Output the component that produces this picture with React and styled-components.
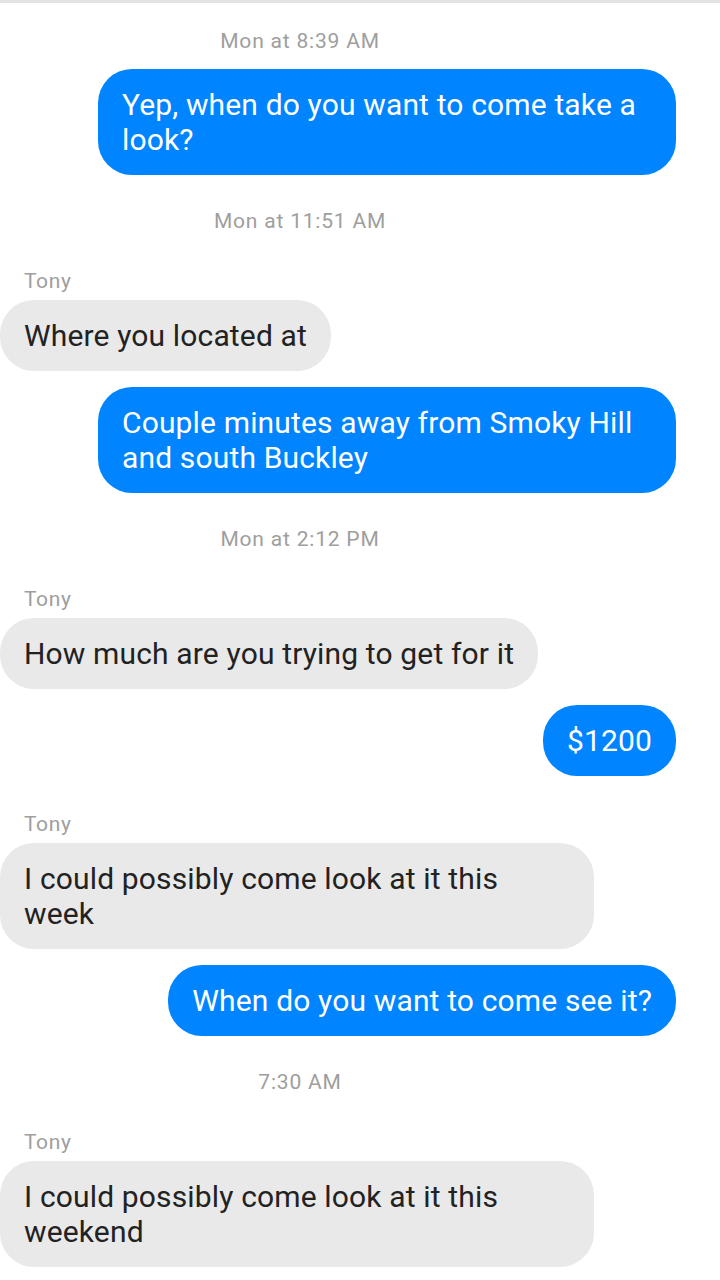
import React from "react";
import styled, { createGlobalStyle } from "styled-components";

const Global = createGlobalStyle`
  html, body { margin: 0; padding: 0; background: #fff; }
  body { font-family: Roboto, "Noto Sans", "Liberation Sans", sans-serif; }
`;

const Screen = styled.div`
  width: 720px;
  min-height: 1280px;
  background: #fff;
  border-top: 3px solid #e3e3e3;
  box-sizing: border-box;
  display: flex;
  flex-direction: column;
  padding-top: 26px;
`;

const Stamp = styled.div`
  width: 600px;
  text-align: center;
  font-size: 21px;
  letter-spacing: 0.8px;
  line-height: 24px;
  color: #9e9e9e;
  margin-top: ${(p) => (p.$first ? "0" : "34px")};
  margin-bottom: ${(p) => (p.$toBubble ? "16px" : "0")};
`;

const Sender = styled.div`
  padding-left: 24px;
  font-size: 21px;
  letter-spacing: 0.6px;
  line-height: 24px;
  color: #9e9e9e;
  margin-top: 36px;
  margin-bottom: 7px;
`;

const Row = styled.div`
  display: flex;
  justify-content: ${(p) => (p.$out ? "flex-end" : "flex-start")};
  padding-right: ${(p) => (p.$out ? "44px" : "0")};
  margin-top: ${(p) => (p.$gap ? "16px" : "0")};
`;

const Bubble = styled.div`
  box-sizing: border-box;
  max-width: ${(p) => (p.$out ? "578px" : "594px")};
  width: ${(p) => (p.$wrap ? (p.$out ? "578px" : "594px") : "auto")};
  padding: 18px ${(p) => (p.$wrap ? "30px" : "24px")} 18px 24px;
  border-radius: 34px;
  font-size: 30px;
  letter-spacing: 0.15px;
  line-height: 35px;
  background: ${(p) => (p.$out ? "#0084ff" : "#e9e9e9")};
  color: ${(p) => (p.$out ? "#ffffff" : "#222222")};
`;

const items = [
  { t: "stamp", text: "Mon at 8:39 AM", first: true, toBubble: true },
  { t: "out", text: "Yep, when do you want to come take a look?", wrap: true },
  { t: "stamp", text: "Mon at 11:51 AM" },
  { t: "sender", text: "Tony" },
  { t: "in", text: "Where you located at" },
  { t: "out", text: "Couple minutes away from Smoky Hill and south Buckley", wrap: true, gap: true },
  { t: "stamp", text: "Mon at 2:12 PM" },
  { t: "sender", text: "Tony" },
  { t: "in", text: "How much are you trying to get for it" },
  { t: "out", text: "$1200", gap: true },
  { t: "sender", text: "Tony" },
  { t: "in", text: "I could possibly come look at it this week", wrap: true },
  { t: "out", text: "When do you want to come see it?", gap: true },
  { t: "stamp", text: "7:30 AM" },
  { t: "sender", text: "Tony" },
  { t: "in", text: "I could possibly come look at it this weekend", wrap: true },
];

export default function App() {
  return (
    <>
      <Global />
      <Screen>
        {items.map((it, i) => {
          if (it.t === "stamp")
            return (
              <Stamp key={i} $first={it.first} $toBubble={it.toBubble}>
                {it.text}
              </Stamp>
            );
          if (it.t === "sender") return <Sender key={i}>{it.text}</Sender>;
          const out = it.t === "out";
          return (
            <Row key={i} $out={out} $gap={it.gap}>
              <Bubble $out={out} $wrap={it.wrap}>
                {it.text}
              </Bubble>
            </Row>
          );
        })}
      </Screen>
    </>
  );
}
